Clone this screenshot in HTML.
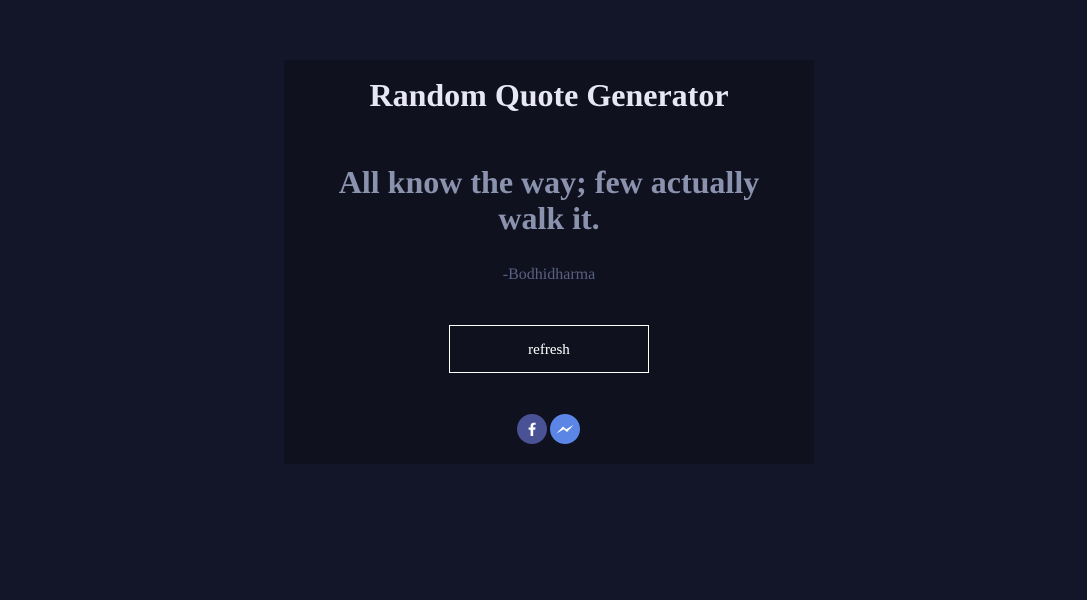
<!DOCTYPE html>
<html><head><style>
body{margin:0;background:#131628;width:1087px;height:600px;font-family:"Liberation Serif",serif;}
.card{position:absolute;left:284px;top:60px;width:530px;height:404px;background:#0f111f;text-align:center;}
h1{position:absolute;top:17px;left:0;right:0;margin:0;font-size:32px;color:#e8e8f4;line-height:36px;}
.q{position:absolute;top:104px;left:40px;right:40px;margin:0;font-size:32px;font-weight:bold;color:#8a92ad;line-height:36px;}
.a{position:absolute;top:206px;left:0;right:0;font-size:16px;color:#596080;}
.btn{position:absolute;left:165px;top:265px;width:198px;height:46px;border:1px solid #fff;color:#fff;font-size:15px;line-height:48px;}
.ic{position:absolute;top:354px;width:30px;height:30px;border-radius:50%;}
</style></head><body>
<div class="card">
<h1>Random Quote Generator</h1>
<div class="q">All know the way; few actually walk it.</div>
<div class="a">-Bodhidharma</div>
<div class="btn">refresh</div>
<div class="ic" style="left:233px;background:#4a5296"><svg width="30" height="30"><path d="M16.2 22v-6.3h2l.3-2.3h-2.3v-1.5c0-.7.2-1.1 1.1-1.1h1.3V8.8c-.2 0-1-.1-1.9-.1-1.9 0-3.100 1.100-3.100 3.200v1.6h-2v2.3h2V22z" fill="#fff"/></svg></div>
<div class="ic" style="left:266px;background:#5b86e5"><svg width="30" height="30"><path d="M6.5 19.5l6.5-7 3.2 2.8 7.300-4.300-6.500 7-3.200-2.800z" fill="#fff"/></svg></div>
</div>
</body></html>
